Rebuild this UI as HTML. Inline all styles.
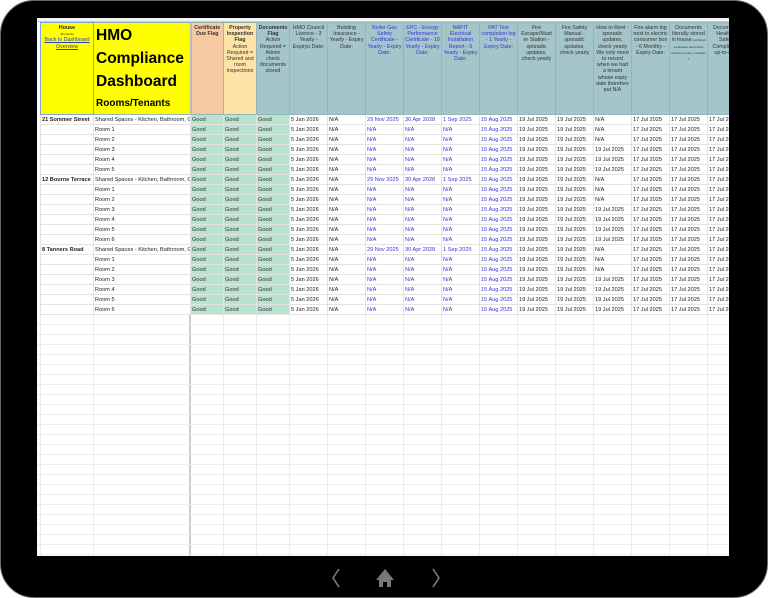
<!DOCTYPE html>
<html><head><meta charset="utf-8"><style>
*{margin:0;padding:0;box-sizing:border-box}
body{width:768px;height:598px;background:#fff;overflow:hidden;position:relative;font-family:"Liberation Sans",sans-serif}
.tab{position:absolute;left:0;top:0;width:768px;height:598px;background:#000;border-radius:34px;border:1px solid #666}
.scr{position:absolute;left:37px;top:18px;width:692px;height:538px;background:#fff;overflow:hidden}
.letters{position:absolute;left:0;top:0;height:4px;width:100%;background:#f4f4f4;border-bottom:1px solid #ccc}
table{position:absolute;left:3px;top:4px;border-collapse:collapse;table-layout:fixed;width:705px}
td{border:1px solid #e3e3e3;height:10px;font-size:5.6px;line-height:8px;padding:0 1px;white-space:nowrap;overflow:hidden;color:#222;vertical-align:middle}
tr.h td{height:92px;background:#a4c5c9;white-space:normal;text-align:center;vertical-align:top;font-size:5.3px;line-height:6.2px;padding-top:2px;border-color:#93b6ba;color:#333}
tr.h td>div{height:88px;overflow:hidden}
tr.h td.b{color:#3535d8}
td.g{background:#b9e3cf;color:#333}
td.bl{color:#3535d8}
.s{font-weight:bold}
.empty{position:absolute;left:0;top:297px;width:692px;height:245px;
background-image:repeating-linear-gradient(to bottom,transparent 0,transparent 9px,#ececec 9px,#ececec 10px),
linear-gradient(to right,transparent 3px,#ececec 3px,#ececec 4px,transparent 4px,transparent 56px,#ececec 56px,#ececec 57px,transparent 57px,transparent 152px,#ccc 152px,#ccc 154px,transparent 154px,transparent 186px,#ececec 186px,#ececec 187px,transparent 187px,transparent 219px,#ececec 219px,#ececec 220px,transparent 220px,transparent 252px,#ececec 252px,#ececec 253px,transparent 253px,transparent 290px,#ececec 290px,#ececec 291px,transparent 291px,transparent 328px,#ececec 328px,#ececec 329px,transparent 329px,transparent 366px,#ececec 366px,#ececec 367px,transparent 367px,transparent 404px,#ececec 404px,#ececec 405px,transparent 405px,transparent 442px,#ececec 442px,#ececec 443px,transparent 443px,transparent 480px,#ececec 480px,#ececec 481px,transparent 481px,transparent 518px,#ececec 518px,#ececec 519px,transparent 519px,transparent 556px,#ececec 556px,#ececec 557px,transparent 557px,transparent 594px,#ececec 594px,#ececec 595px,transparent 595px,transparent 632px,#ececec 632px,#ececec 633px,transparent 633px,transparent 670px,#ececec 670px,#ececec 671px,transparent 671px)}
.nav{position:absolute;top:567px}
</style></head><body>
<div class="tab"></div>
<div class="scr">
<div class="letters"></div>
<table>
<colgroup><col style="width:53px"><col style="width:97px"><col style="width:33px"><col style="width:33px"><col style="width:33px"><col style="width:38px"><col style="width:38px"><col style="width:38px"><col style="width:38px"><col style="width:38px"><col style="width:38px"><col style="width:38px"><col style="width:38px"><col style="width:38px"><col style="width:38px"><col style="width:38px"><col style="width:38px"></colgroup>
<tr class="h">
<td style="background:#ffff00;border:1px solid #7aa7e0;color:#222"><div><b>House</b><br><span style="font-size:3px;line-height:4px">36 checks</span><br><u style="color:#2a3fb8">Back to Dashboard Overview</u></div></td>
<td style="background:#ffff00;text-align:left;padding:3px 2px 0;color:#000;border-right:2px solid #bbb"><div style="line-height:20px"><b style="font-size:15.5px">HMO<br>Compliance<br>Dashboard</b><br><span style="font-size:10px;line-height:12px;font-weight:bold">Rooms/Tenants</span></div></td>
<td style="background:#f7c9a0"><div><b>Certificate Due Flag</b></div></td>
<td style="background:#fde4a6"><div><b>Property Inspection Flag</b><br>Action Required = Shared and room inspections</div></td>
<td><div><b>Documents Flag</b><br>Action Required = Admin check documents stored</div></td>
<td><div>HMO Council Licence - 3 Yearly - Expiryu Date:</div></td>
<td><div>Building Insurance - Yearly - Expiry Date:</div></td>
<td class="b"><div>Boiler Gas Safety Certificate - Yearly - Expiry Date:</div></td>
<td class="b"><div>EPC - Energy Performance Certificate - 10 Yearly - Expiry Date:</div></td>
<td class="b"><div>NAPIT Electrical Installation Report - 5 Yearly - Expiry Date:</div></td>
<td class="b"><div>PAT Test completion log - 1 Yearly - Expiry Date:</div></td>
<td><div>Fire Escape/Must er Station - sporadic updates, check yearly</div></td>
<td><div>Fire Safety Manual - sporadic updates, check yearly</div></td>
<td><div>How to Rent - sporadic updates, check yearly We only need to record when we had a tenant whose expiy date therefore put N/A</div></td>
<td><div>Fire alarm log next to electric consumer box - 6 Monthly - Expiry Date:</div></td>
<td><div>Documents literally stored in house<span style="font-size:3px"> combined certificates documents stored in house - Location ?</span></div></td>
<td><div>Documents Health &amp; Safety Compliance up-to-date</div></td>
</tr>
<tr><td class="s">21 Sommer Street</td><td>Shared Spaces - Kitchen, Bathroom, Garden</td><td class="g">Good</td><td class="g">Good</td><td class="g">Good</td><td>5 Jan 2026</td><td>N/A</td><td class="bl">29 Nov 2025</td><td class="bl">30 Apr 2028</td><td class="bl">1 Sep 2025</td><td class="bl">15 Aug 2025</td><td>19 Jul 2025</td><td>19 Jul 2025</td><td>N/A</td><td>17 Jul 2025</td><td>17 Jul 2025</td><td>17 Jul 2025</td></tr>
<tr><td></td><td>Room 1</td><td class="g">Good</td><td class="g">Good</td><td class="g">Good</td><td>5 Jan 2026</td><td>N/A</td><td class="bl">N/A</td><td class="bl">N/A</td><td class="bl">N/A</td><td class="bl">15 Aug 2025</td><td>19 Jul 2025</td><td>19 Jul 2025</td><td>N/A</td><td>17 Jul 2025</td><td>17 Jul 2025</td><td>17 Jul 2025</td></tr>
<tr><td></td><td>Room 2</td><td class="g">Good</td><td class="g">Good</td><td class="g">Good</td><td>5 Jan 2026</td><td>N/A</td><td class="bl">N/A</td><td class="bl">N/A</td><td class="bl">N/A</td><td class="bl">15 Aug 2025</td><td>19 Jul 2025</td><td>19 Jul 2025</td><td>N/A</td><td>17 Jul 2025</td><td>17 Jul 2025</td><td>17 Jul 2025</td></tr>
<tr><td></td><td>Room 3</td><td class="g">Good</td><td class="g">Good</td><td class="g">Good</td><td>5 Jan 2026</td><td>N/A</td><td class="bl">N/A</td><td class="bl">N/A</td><td class="bl">N/A</td><td class="bl">15 Aug 2025</td><td>19 Jul 2025</td><td>19 Jul 2025</td><td>19 Jul 2025</td><td>17 Jul 2025</td><td>17 Jul 2025</td><td>17 Jul 2025</td></tr>
<tr><td></td><td>Room 4</td><td class="g">Good</td><td class="g">Good</td><td class="g">Good</td><td>5 Jan 2026</td><td>N/A</td><td class="bl">N/A</td><td class="bl">N/A</td><td class="bl">N/A</td><td class="bl">15 Aug 2025</td><td>19 Jul 2025</td><td>19 Jul 2025</td><td>19 Jul 2025</td><td>17 Jul 2025</td><td>17 Jul 2025</td><td>17 Jul 2025</td></tr>
<tr><td></td><td>Room 5</td><td class="g">Good</td><td class="g">Good</td><td class="g">Good</td><td>5 Jan 2026</td><td>N/A</td><td class="bl">N/A</td><td class="bl">N/A</td><td class="bl">N/A</td><td class="bl">15 Aug 2025</td><td>19 Jul 2025</td><td>19 Jul 2025</td><td>19 Jul 2025</td><td>17 Jul 2025</td><td>17 Jul 2025</td><td>17 Jul 2025</td></tr>
<tr><td class="s">12 Bourne Terrace</td><td>Shared Spaces - Kitchen, Bathroom, Garden</td><td class="g">Good</td><td class="g">Good</td><td class="g">Good</td><td>5 Jan 2026</td><td>N/A</td><td class="bl">29 Nov 2025</td><td class="bl">30 Apr 2028</td><td class="bl">1 Sep 2025</td><td class="bl">15 Aug 2025</td><td>19 Jul 2025</td><td>19 Jul 2025</td><td>N/A</td><td>17 Jul 2025</td><td>17 Jul 2025</td><td>17 Jul 2025</td></tr>
<tr><td></td><td>Room 1</td><td class="g">Good</td><td class="g">Good</td><td class="g">Good</td><td>5 Jan 2026</td><td>N/A</td><td class="bl">N/A</td><td class="bl">N/A</td><td class="bl">N/A</td><td class="bl">15 Aug 2025</td><td>19 Jul 2025</td><td>19 Jul 2025</td><td>N/A</td><td>17 Jul 2025</td><td>17 Jul 2025</td><td>17 Jul 2025</td></tr>
<tr><td></td><td>Room 2</td><td class="g">Good</td><td class="g">Good</td><td class="g">Good</td><td>5 Jan 2026</td><td>N/A</td><td class="bl">N/A</td><td class="bl">N/A</td><td class="bl">N/A</td><td class="bl">15 Aug 2025</td><td>19 Jul 2025</td><td>19 Jul 2025</td><td>N/A</td><td>17 Jul 2025</td><td>17 Jul 2025</td><td>17 Jul 2025</td></tr>
<tr><td></td><td>Room 3</td><td class="g">Good</td><td class="g">Good</td><td class="g">Good</td><td>5 Jan 2026</td><td>N/A</td><td class="bl">N/A</td><td class="bl">N/A</td><td class="bl">N/A</td><td class="bl">15 Aug 2025</td><td>19 Jul 2025</td><td>19 Jul 2025</td><td>19 Jul 2025</td><td>17 Jul 2025</td><td>17 Jul 2025</td><td>17 Jul 2025</td></tr>
<tr><td></td><td>Room 4</td><td class="g">Good</td><td class="g">Good</td><td class="g">Good</td><td>5 Jan 2026</td><td>N/A</td><td class="bl">N/A</td><td class="bl">N/A</td><td class="bl">N/A</td><td class="bl">15 Aug 2025</td><td>19 Jul 2025</td><td>19 Jul 2025</td><td>19 Jul 2025</td><td>17 Jul 2025</td><td>17 Jul 2025</td><td>17 Jul 2025</td></tr>
<tr><td></td><td>Room 5</td><td class="g">Good</td><td class="g">Good</td><td class="g">Good</td><td>5 Jan 2026</td><td>N/A</td><td class="bl">N/A</td><td class="bl">N/A</td><td class="bl">N/A</td><td class="bl">15 Aug 2025</td><td>19 Jul 2025</td><td>19 Jul 2025</td><td>19 Jul 2025</td><td>17 Jul 2025</td><td>17 Jul 2025</td><td>17 Jul 2025</td></tr>
<tr><td></td><td>Room 6</td><td class="g">Good</td><td class="g">Good</td><td class="g">Good</td><td>5 Jan 2026</td><td>N/A</td><td class="bl">N/A</td><td class="bl">N/A</td><td class="bl">N/A</td><td class="bl">15 Aug 2025</td><td>19 Jul 2025</td><td>19 Jul 2025</td><td>19 Jul 2025</td><td>17 Jul 2025</td><td>17 Jul 2025</td><td>17 Jul 2025</td></tr>
<tr><td class="s">8 Tanners Road</td><td>Shared Spaces - Kitchen, Bathroom, Garden</td><td class="g">Good</td><td class="g">Good</td><td class="g">Good</td><td>5 Jan 2026</td><td>N/A</td><td class="bl">29 Nov 2025</td><td class="bl">30 Apr 2028</td><td class="bl">1 Sep 2025</td><td class="bl">15 Aug 2025</td><td>19 Jul 2025</td><td>19 Jul 2025</td><td>N/A</td><td>17 Jul 2025</td><td>17 Jul 2025</td><td>17 Jul 2025</td></tr>
<tr><td></td><td>Room 1</td><td class="g">Good</td><td class="g">Good</td><td class="g">Good</td><td>5 Jan 2026</td><td>N/A</td><td class="bl">N/A</td><td class="bl">N/A</td><td class="bl">N/A</td><td class="bl">15 Aug 2025</td><td>19 Jul 2025</td><td>19 Jul 2025</td><td>N/A</td><td>17 Jul 2025</td><td>17 Jul 2025</td><td>17 Jul 2025</td></tr>
<tr><td></td><td>Room 2</td><td class="g">Good</td><td class="g">Good</td><td class="g">Good</td><td>5 Jan 2026</td><td>N/A</td><td class="bl">N/A</td><td class="bl">N/A</td><td class="bl">N/A</td><td class="bl">15 Aug 2025</td><td>19 Jul 2025</td><td>19 Jul 2025</td><td>N/A</td><td>17 Jul 2025</td><td>17 Jul 2025</td><td>17 Jul 2025</td></tr>
<tr><td></td><td>Room 3</td><td class="g">Good</td><td class="g">Good</td><td class="g">Good</td><td>5 Jan 2026</td><td>N/A</td><td class="bl">N/A</td><td class="bl">N/A</td><td class="bl">N/A</td><td class="bl">15 Aug 2025</td><td>19 Jul 2025</td><td>19 Jul 2025</td><td>19 Jul 2025</td><td>17 Jul 2025</td><td>17 Jul 2025</td><td>17 Jul 2025</td></tr>
<tr><td></td><td>Room 4</td><td class="g">Good</td><td class="g">Good</td><td class="g">Good</td><td>5 Jan 2026</td><td>N/A</td><td class="bl">N/A</td><td class="bl">N/A</td><td class="bl">N/A</td><td class="bl">15 Aug 2025</td><td>19 Jul 2025</td><td>19 Jul 2025</td><td>19 Jul 2025</td><td>17 Jul 2025</td><td>17 Jul 2025</td><td>17 Jul 2025</td></tr>
<tr><td></td><td>Room 5</td><td class="g">Good</td><td class="g">Good</td><td class="g">Good</td><td>5 Jan 2026</td><td>N/A</td><td class="bl">N/A</td><td class="bl">N/A</td><td class="bl">N/A</td><td class="bl">15 Aug 2025</td><td>19 Jul 2025</td><td>19 Jul 2025</td><td>19 Jul 2025</td><td>17 Jul 2025</td><td>17 Jul 2025</td><td>17 Jul 2025</td></tr>
<tr><td></td><td>Room 6</td><td class="g">Good</td><td class="g">Good</td><td class="g">Good</td><td>5 Jan 2026</td><td>N/A</td><td class="bl">N/A</td><td class="bl">N/A</td><td class="bl">N/A</td><td class="bl">15 Aug 2025</td><td>19 Jul 2025</td><td>19 Jul 2025</td><td>19 Jul 2025</td><td>17 Jul 2025</td><td>17 Jul 2025</td><td>17 Jul 2025</td></tr>
</table>
<div class="empty"></div>
</div>
<svg class="nav" style="left:325px" width="120" height="22" viewBox="0 0 120 22">
<path d="M14 2 L8 11 L14 20" fill="none" stroke="#777" stroke-width="1.6"/>
<path d="M60 2 L51 13 L54 13 L54 20 L58 20 L58 15 L62 15 L62 20 L66 20 L66 13 L69 13 Z" fill="#777"/>
<path d="M108 2 L114 11 L108 20" fill="none" stroke="#777" stroke-width="1.6"/>
</svg>
</body></html>
